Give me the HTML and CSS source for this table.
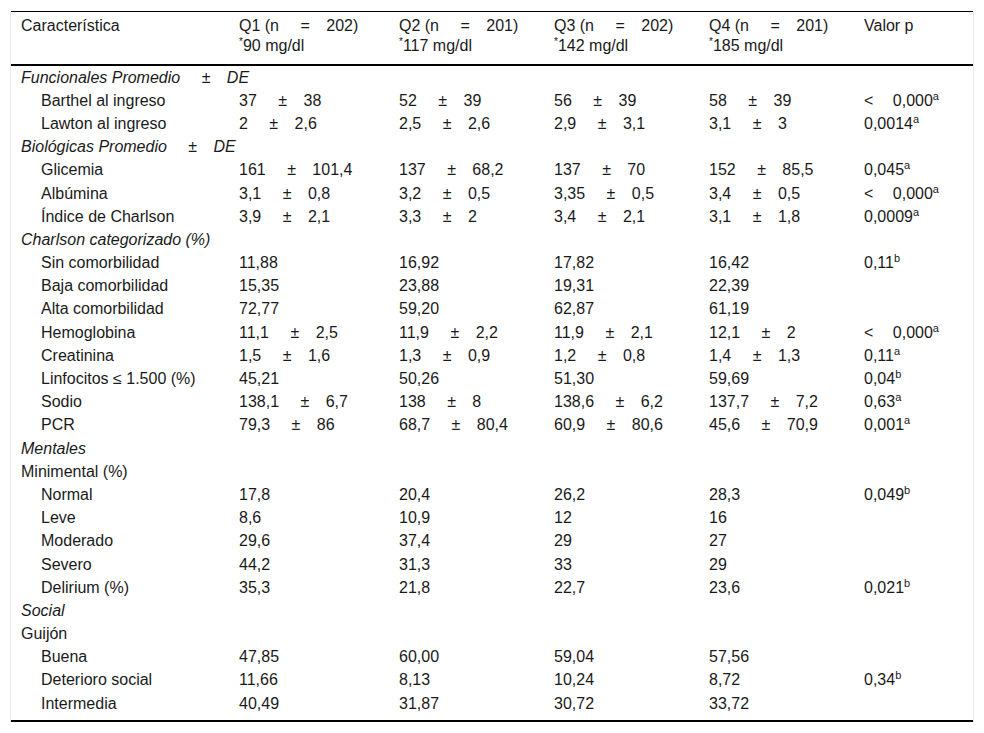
FILE: index.html
```html
<!DOCTYPE html>
<html lang="es">
<head>
<meta charset="utf-8">
<title>Tabla</title>
<link rel="stylesheet" href="styles.css">
</head>
<body>
<div class="wrap">
<table class="data">
<colgroup>
<col class="c0"><col class="c1"><col class="c2"><col class="c3"><col class="c4"><col class="c5">
</colgroup>
<thead>
<tr>
<th>Característica</th>
<th>Q1 (n <span class="op">=</span> 202)<br><sup class="ast">*</sup>90 mg/dl</th>
<th>Q2 (n <span class="op">=</span> 201)<br><sup class="ast">*</sup>117 mg/dl</th>
<th>Q3 (n <span class="op">=</span> 202)<br><sup class="ast">*</sup>142 mg/dl</th>
<th>Q4 (n <span class="op">=</span> 201)<br><sup class="ast">*</sup>185 mg/dl</th>
<th>Valor p</th>
</tr>
</thead>
<tbody>
<tr class="grp"><td colspan="6"><em>Funcionales Promedio <span class="op">±</span> DE</em></td></tr>
<tr class="sub"><td>Barthel al ingreso</td><td>37 <span class="op">±</span> 38</td><td>52 <span class="op">±</span> 39</td><td>56 <span class="op">±</span> 39</td><td>58 <span class="op">±</span> 39</td><td><span class="lt">&lt;</span> 0,000<sup>a</sup></td></tr>
<tr class="sub"><td>Lawton al ingreso</td><td>2 <span class="op">±</span> 2,6</td><td>2,5 <span class="op">±</span> 2,6</td><td>2,9 <span class="op">±</span> 3,1</td><td>3,1 <span class="op">±</span> 3</td><td>0,0014<sup>a</sup></td></tr>
<tr class="grp"><td colspan="6"><em>Biológicas Promedio <span class="op">±</span> DE</em></td></tr>
<tr class="sub"><td>Glicemia</td><td>161 <span class="op">±</span> 101,4</td><td>137 <span class="op">±</span> 68,2</td><td>137 <span class="op">±</span> 70</td><td>152 <span class="op">±</span> 85,5</td><td>0,045<sup>a</sup></td></tr>
<tr class="sub"><td>Albúmina</td><td>3,1 <span class="op">±</span> 0,8</td><td>3,2 <span class="op">±</span> 0,5</td><td>3,35 <span class="op">±</span> 0,5</td><td>3,4 <span class="op">±</span> 0,5</td><td><span class="lt">&lt;</span> 0,000<sup>a</sup></td></tr>
<tr class="sub"><td>Índice de Charlson</td><td>3,9 <span class="op">±</span> 2,1</td><td>3,3 <span class="op">±</span> 2</td><td>3,4 <span class="op">±</span> 2,1</td><td>3,1 <span class="op">±</span> 1,8</td><td>0,0009<sup>a</sup></td></tr>
<tr class="grp"><td colspan="6"><em>Charlson categorizado (%)</em></td></tr>
<tr class="sub"><td>Sin comorbilidad</td><td>11,88</td><td>16,92</td><td>17,82</td><td>16,42</td><td>0,11<sup>b</sup></td></tr>
<tr class="sub"><td>Baja comorbilidad</td><td>15,35</td><td>23,88</td><td>19,31</td><td>22,39</td><td></td></tr>
<tr class="sub"><td>Alta comorbilidad</td><td>72,77</td><td>59,20</td><td>62,87</td><td>61,19</td><td></td></tr>
<tr class="sub"><td>Hemoglobina</td><td>11,1 <span class="op">±</span> 2,5</td><td>11,9 <span class="op">±</span> 2,2</td><td>11,9 <span class="op">±</span> 2,1</td><td>12,1 <span class="op">±</span> 2</td><td><span class="lt">&lt;</span> 0,000<sup>a</sup></td></tr>
<tr class="sub"><td>Creatinina</td><td>1,5 <span class="op">±</span> 1,6</td><td>1,3 <span class="op">±</span> 0,9</td><td>1,2 <span class="op">±</span> 0,8</td><td>1,4 <span class="op">±</span> 1,3</td><td>0,11<sup>a</sup></td></tr>
<tr class="sub"><td>Linfocitos ≤ 1.500 (%)</td><td>45,21</td><td>50,26</td><td>51,30</td><td>59,69</td><td>0,04<sup>b</sup></td></tr>
<tr class="sub"><td>Sodio</td><td>138,1 <span class="op">±</span> 6,7</td><td>138 <span class="op">±</span> 8</td><td>138,6 <span class="op">±</span> 6,2</td><td>137,7 <span class="op">±</span> 7,2</td><td>0,63<sup>a</sup></td></tr>
<tr class="sub"><td>PCR</td><td>79,3 <span class="op">±</span> 86</td><td>68,7 <span class="op">±</span> 80,4</td><td>60,9 <span class="op">±</span> 80,6</td><td>45,6 <span class="op">±</span> 70,9</td><td>0,001<sup>a</sup></td></tr>
<tr class="grp"><td colspan="6"><em>Mentales</em></td></tr>
<tr class="grp"><td colspan="6">Minimental (%)</td></tr>
<tr class="sub"><td>Normal</td><td>17,8</td><td>20,4</td><td>26,2</td><td>28,3</td><td>0,049<sup>b</sup></td></tr>
<tr class="sub"><td>Leve</td><td>8,6</td><td>10,9</td><td>12</td><td>16</td><td></td></tr>
<tr class="sub"><td>Moderado</td><td>29,6</td><td>37,4</td><td>29</td><td>27</td><td></td></tr>
<tr class="sub"><td>Severo</td><td>44,2</td><td>31,3</td><td>33</td><td>29</td><td></td></tr>
<tr class="sub"><td>Delirium (%)</td><td>35,3</td><td>21,8</td><td>22,7</td><td>23,6</td><td>0,021<sup>b</sup></td></tr>
<tr class="grp"><td colspan="6"><em>Social</em></td></tr>
<tr class="grp"><td colspan="6">Guijón</td></tr>
<tr class="sub"><td>Buena</td><td>47,85</td><td>60,00</td><td>59,04</td><td>57,56</td><td></td></tr>
<tr class="sub"><td>Deterioro social</td><td>11,66</td><td>8,13</td><td>10,24</td><td>8,72</td><td>0,34<sup>b</sup></td></tr>
<tr class="sub last"><td>Intermedia</td><td>40,49</td><td>31,87</td><td>30,72</td><td>33,72</td><td></td></tr>
</tbody>
</table>
</div>
</body>
</html>
```
FILE: styles.css
```css
html, body {
  margin: 0;
  padding: 0;
  background: #fff;
}

body {
  font-family: "Liberation Sans", Arial, Helvetica, sans-serif;
  font-size: 16px;
  color: #1a1a1a;
}

.wrap {
  margin: 11px 0 0 10px;
  width: 962px;
  border-left: 1px solid #e8e8e8;
  border-right: 1px solid #e8e8e8;
}

.data {
  width: 962px;
  border-collapse: collapse;
  table-layout: fixed;
  border-top: 1px solid #000;
  border-bottom: 2px solid #000;
}

.c0 { width: 218px; }
.c1 { width: 160px; }
.c2 { width: 155px; }
.c3 { width: 155px; }
.c4 { width: 155px; }
.c5 { width: 119px; }

.data th {
  font-weight: normal;
  text-align: left;
  vertical-align: top;
  line-height: 20px;
  padding: 4px 10px 8px 10px;
  border-bottom: 2px solid #000;
  white-space: nowrap;
}

.data td {
  text-align: left;
  vertical-align: top;
  line-height: 20px;
  padding: 1.6px 10px;
  white-space: nowrap;
}

.sub td:first-child {
  padding-left: 30px;
}

.last td {
  padding-bottom: 6px;
}

.op {
  margin: 0 12px 0 17px;
}

.lt {
  margin-right: 15px;
}

sup {
  font-size: 11px;
  line-height: 0;
  vertical-align: 6px;
}

.ast {
  font-size: 10px;
  vertical-align: 6px;
}
```
